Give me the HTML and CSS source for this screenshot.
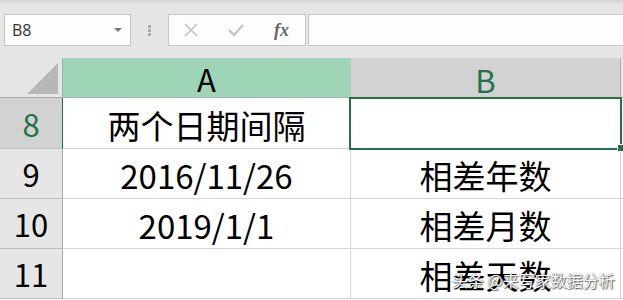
FILE: index.html
```html
<!DOCTYPE html>
<html lang="zh-CN">
<head>
    <meta charset="UTF-8">
    <meta name="viewport" content="width=device-width, initial-scale=1.0">
    <title>日期间隔</title>
    <link rel="stylesheet" href="styles.css">
</head>
<body>

    <div class="toolbar">
        <div class="name-box">
            <span>B8</span>
            <span class="caret"></span>
        </div>
        <div class="grip">
            <span></span><span></span><span></span>
        </div>
        <div class="fx-buttons">
            <svg class="btn-icon" width="16" height="16" viewBox="0 0 16 16">
                <path d="M2 2 L14 14 M14 2 L2 14" stroke="#c3c3c3" stroke-width="1.6" fill="none"/>
            </svg>
            <svg class="btn-icon" width="18" height="16" viewBox="0 0 18 16">
                <path d="M2 8 L7 13 L16 3" stroke="#c3c3c3" stroke-width="2.4" fill="none"/>
            </svg>
            <span class="fx">fx</span>
        </div>
        <div class="formula-box"></div>
    </div>

    <div class="sheet">
        <!-- header row -->
        <div class="corner">
            <svg width="62" height="39" viewBox="0 0 62 39">
                <polygon points="58,5 58,36 27,36" fill="#b7b7b7"/>
            </svg>
        </div>
        <div class="col-head col-active">A</div>
        <div class="col-head col-current">B</div>
        <div class="col-head edge"></div>

        <!-- row 8 -->
        <div class="row-head row-current">8</div>
        <div class="cell">两个日期间隔</div>
        <div class="cell selected"></div>
        <div class="cell edge"></div>

        <!-- row 9 -->
        <div class="row-head">9</div>
        <div class="cell">2016/11/26</div>
        <div class="cell">相差年数</div>
        <div class="cell edge"></div>

        <!-- row 10 -->
        <div class="row-head">10</div>
        <div class="cell">2019/1/1</div>
        <div class="cell">相差月数</div>
        <div class="cell edge"></div>

        <!-- row 11 -->
        <div class="row-head">11</div>
        <div class="cell"></div>
        <div class="cell">相差天数</div>
        <div class="cell edge"></div>
    </div>

    <div class="watermark">头条 @来写家数据分析</div>

</body>
</html>
```

FILE: styles.css
```css
* {
    margin: 0;
    padding: 0;
    box-sizing: border-box;
}

body {
    width: 623px;
    height: 300px;
    overflow: hidden;
    background-color: #e6e6e6;
    font-family: "Noto Sans CJK SC", "Noto Sans", sans-serif;
    color: #000;
    position: relative;
}

/* formula bar */
.toolbar {
    height: 58px;
    padding: 14px 0 0 4px;
    display: flex;
    align-items: flex-start;
    background: linear-gradient(#d2d2d2 0px, #e3e3e3 4px, #e6e6e6 7px);
}

.name-box {
    width: 127px;
    height: 32px;
    background-color: #fdfdfd;
    border: 1px solid #c6c6c6;
    display: flex;
    align-items: center;
    justify-content: space-between;
    padding: 0 8px 0 7px;
    font-family: "Open Sans", "Liberation Sans", sans-serif;
    font-size: 16px;
    color: #333;
}

.caret {
    width: 0;
    height: 0;
    border-left: 4px solid transparent;
    border-right: 4px solid transparent;
    border-top: 4px solid #777;
}

.grip {
    width: 37px;
    height: 32px;
    display: flex;
    flex-direction: column;
    align-items: center;
    justify-content: center;
    gap: 1px;
}

.grip span {
    width: 3px;
    height: 3px;
    background-color: #a9a9a9;
}

.fx-buttons {
    width: 138px;
    height: 32px;
    background-color: #fdfdfd;
    border: 1px solid #c6c6c6;
    display: flex;
    align-items: center;
    padding-left: 14px;
    gap: 28px;
}

.fx {
    font-family: "Liberation Serif", serif;
    font-style: italic;
    font-weight: bold;
    font-size: 18px;
    color: #666;
    margin-left: 1px;
}

.formula-box {
    flex: 1;
    height: 32px;
    margin-left: 2px;
    background-color: #fdfdfd;
    border: 1px solid #c6c6c6;
    border-right: none;
}

/* grid */
.sheet {
    display: grid;
    grid-template-columns: 63px 288px 270px 2px;
    grid-template-rows: 40px 51px 50px 50px 50px 2px;
    background-color: #fff;
}

.corner {
    background-color: #e6e6e6;
    border-right: 1px solid #ababab;
    border-bottom: 1px solid #ababab;
}

.corner svg {
    display: block;
}

.col-head {
    display: flex;
    align-items: center;
    justify-content: center;
    font-size: 31px;
    line-height: 1;
    padding-top: 2px;
    background-color: #e6e6e6;
    border-right: 1px solid #ababab;
    border-bottom: 1px solid #ababab;
}

.col-active {
    background-color: #9fd5b7;
    border-right-color: #9fd5b7;
}

.col-current {
    background-color: #d2d2d2;
    color: #217346;
    border-bottom: none;
}

.col-head.edge {
    background-color: #e6e6e6;
    border-right: none;
}

.row-head {
    display: flex;
    align-items: center;
    justify-content: center;
    font-size: 31px;
    line-height: 1;
    background-color: #e6e6e6;
    border-right: 1px solid #ababab;
    border-bottom: 1px solid #bdbdbd;
}

.row-current {
    background-color: #d2d2d2;
    color: #217346;
    border-right: 1px solid #217346;
}

.cell {
    display: flex;
    align-items: center;
    justify-content: center;
    font-size: 33px;
    line-height: 1;
    padding-top: 4px;
    border-right: 1px solid #d4d4d4;
    border-bottom: 1px solid #d4d4d4;
    white-space: nowrap;
}

.cell.edge {
    border-right: none;
}

.selected {
    position: relative;
    border: none;
}

.selected::before {
    content: "";
    position: absolute;
    left: -2px;
    top: -1px;
    right: -1px;
    bottom: -1px;
    border: 2px solid #217346;
}

.selected::after {
    content: "";
    position: absolute;
    right: -3px;
    bottom: -3px;
    width: 6px;
    height: 6px;
    background-color: #217346;
    border: 1px solid #fff;
    border-right: none;
}

.watermark {
    position: absolute;
    left: 452px;
    top: 272px;
    font-size: 16px;
    line-height: 1;
    color: #fff;
    text-shadow: 0 0 1px #333, 1px 1px 1px rgba(0, 0, 0, 0.6);
    white-space: nowrap;
}
```
